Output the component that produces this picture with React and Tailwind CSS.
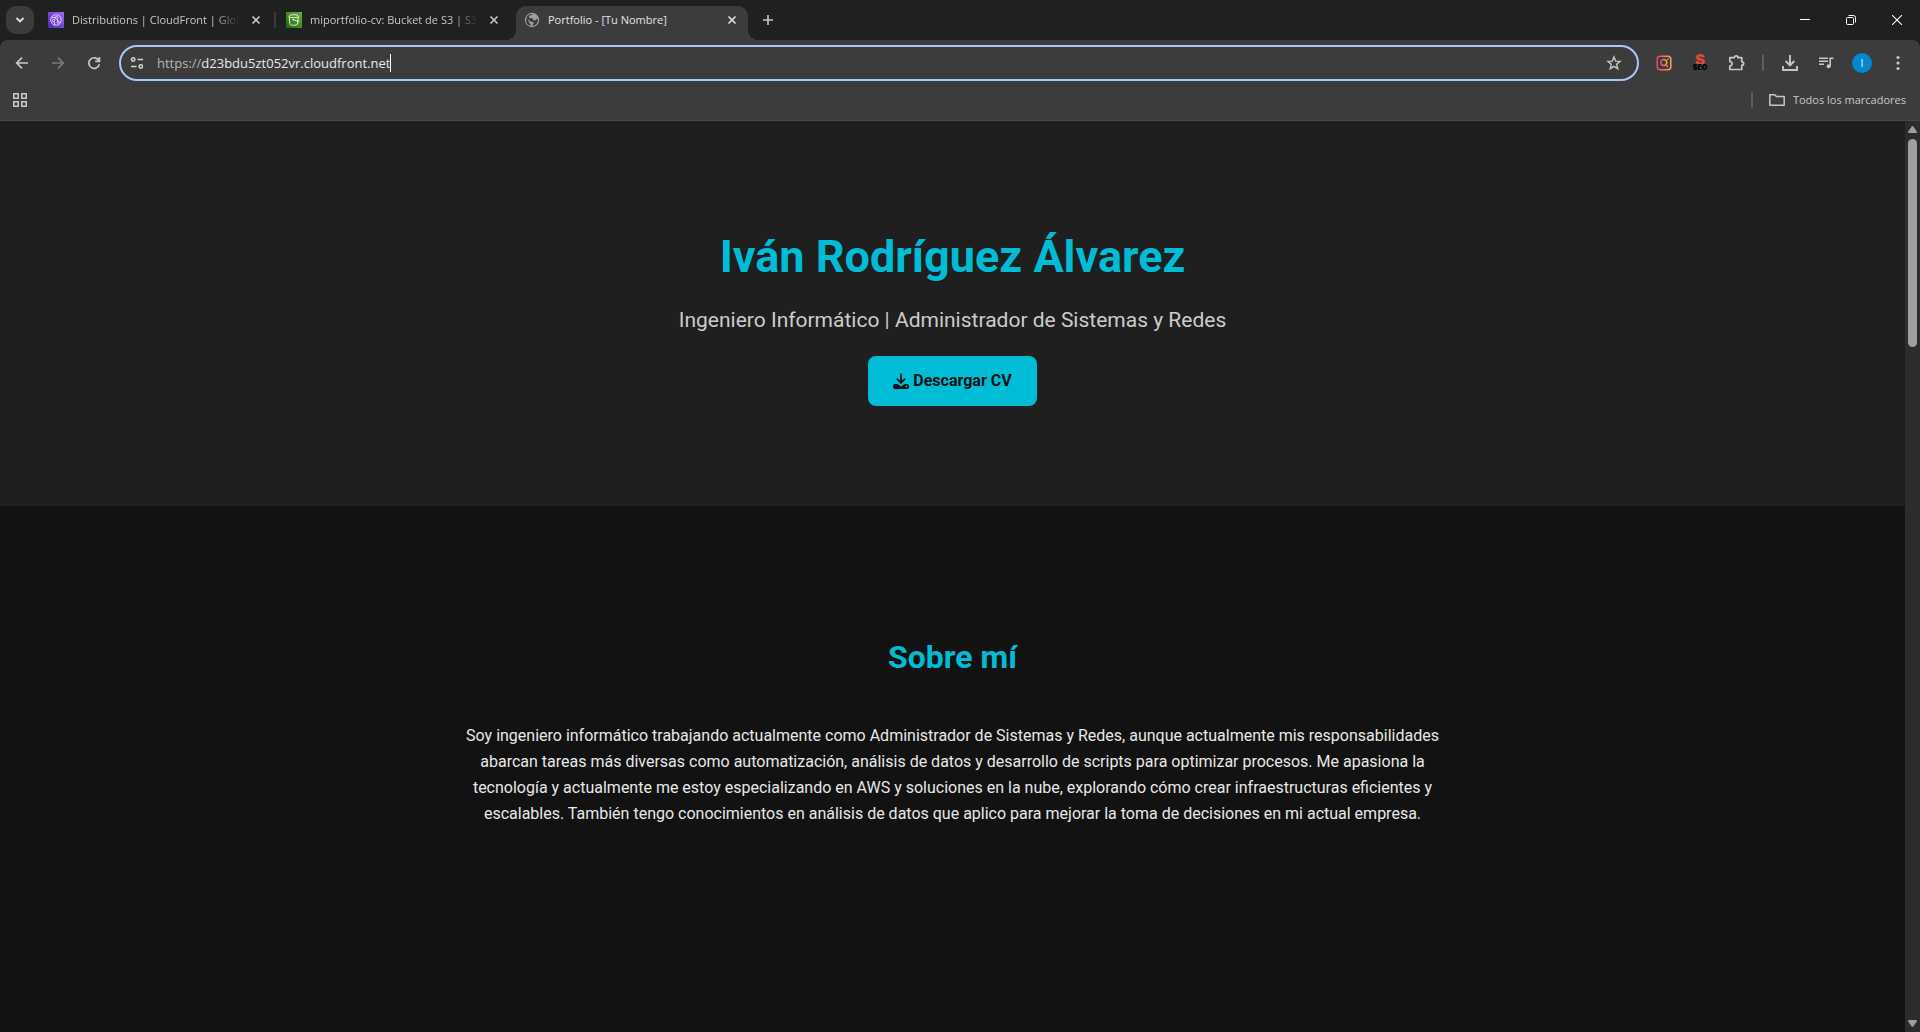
import React from "react";

const uiFont = "font-['Open_Sans','Noto_Sans',sans-serif]";

function Stroke({ size = 16, width = 1.8, children, className = "" }) {
  return (
    <svg width={size} height={size} viewBox={`0 0 ${size} ${size}`} fill="none" stroke="currentColor" strokeWidth={width} className={className} aria-hidden="true">
      {children}
    </svg>
  );
}

function CloudFrontIcon() {
  return (
    <svg width="16" height="16" viewBox="0 0 16 16" className="shrink-0" aria-hidden="true">
      <defs>
        <linearGradient id="cf" x1="0" y1="1" x2="1" y2="0">
          <stop offset="0" stopColor="#4d27aa" />
          <stop offset="1" stopColor="#a166ff" />
        </linearGradient>
      </defs>
      <rect width="16" height="16" fill="url(#cf)" />
      <g fill="none" stroke="#e8defc" strokeWidth="0.9">
        <circle cx="8" cy="8" r="5.3" />
        <circle cx="8.6" cy="5.6" r="1.2" />
        <circle cx="5.6" cy="8.6" r="1.1" />
        <circle cx="10.2" cy="10.2" r="1.1" />
        <path d="M7.6 6.4 6.3 7.7M9 6.8l.9 2.3M3.5 5.6 7.4 5.4M6 9.7l1 3.3" />
      </g>
    </svg>
  );
}

function BucketIcon() {
  return (
    <svg width="16" height="16" viewBox="0 0 16 16" className="shrink-0" aria-hidden="true">
      <defs>
        <linearGradient id="s3" x1="0" y1="1" x2="1" y2="0">
          <stop offset="0" stopColor="#1b660f" />
          <stop offset="1" stopColor="#6cae3e" />
        </linearGradient>
      </defs>
      <rect width="16" height="16" fill="url(#s3)" />
      <g fill="none" stroke="#e3f3dc" strokeWidth="1">
        <path d="M3 4.4 4 12.2c.3 1.4 7 1.4 7.4 0L12.4 4.4" />
        <ellipse cx="7.7" cy="4.2" rx="4.7" ry="1.5" />
        <path d="M7.2 7.4 12 9.6c1 .4 1.3-.5.3-1.1" />
      </g>
      <circle cx="7.2" cy="7.6" r="0.9" fill="#e3f3dc" />
    </svg>
  );
}

function GlobeIcon() {
  return (
    <svg width="16" height="16" viewBox="0 0 16 16" className="shrink-0" aria-hidden="true">
      <circle cx="8" cy="8" r="7.2" fill="#9aa0a6" />
      <path d="M9 2.100 7.200 3.200 5.300 3.600 5 5.600 6.600 6.300 8.600 6.200 9.300 8.200 11.600 8.300 12.200 7.100 14 7.400A6.100 6.100 0 0 1 8.600 14L8.700 12.200 9.800 11.200 8.900 9.900 6.200 9.400 5.200 8 2.100 7.300A6.100 6.100 0 0 0 6.400 13.900L6.700 12 5 10.700 4.800 9.300 2.300 6.200A6.100 6.100 0 0 1 9 2.100Z" fill="#3c3c3c" />
    </svg>
  );
}

function CloseX() {
  return (
    <Stroke size={10} width={1.6}>
      <path d="m1.500 1.500 7 7m0-7-7 7" />
    </Stroke>
  );
}

const tabs = [
  { title: "Distributions | CloudFront | Global", Icon: CloudFrontIcon, divider: true },
  { title: "miportfolio-cv: Bucket de S3 | S3", Icon: BucketIcon, divider: false },
];

function Tab({ title, Icon, divider, active }) {
  return (
    <div
      className={
        active
          ? "relative flex h-[34px] w-[232px] items-center rounded-t-[10px] bg-[#3c3c3c] pb-[6px] pl-2 text-[#e3e3e3]"
          : "relative flex h-[34px] w-[238px] items-center pb-[6px] pl-2 text-[#c7c7c7]"
      }
    >
      {active && (
        <>
          <span className="absolute bottom-0 -left-[10px] size-[10px] bg-[radial-gradient(circle_at_0_0,#1f2020_10px,#3c3c3c_10px)]" />
          <span className="absolute -right-[10px] bottom-0 size-[10px] bg-[radial-gradient(circle_at_100%_0,#1f2020_10px,#3c3c3c_10px)]" />
        </>
      )}
      <Icon />
      <span
        className={
          active
            ? "ml-2 w-[168px] overflow-hidden text-[11px] whitespace-nowrap"
            : "ml-2 w-[168px] overflow-hidden [mask-image:linear-gradient(to_right,#000_85%,transparent_100%)] text-[11px] whitespace-nowrap"
        }
      >
        {title}
      </span>
      <button aria-label="Cerrar pestaña" className="ml-2 flex size-4 items-center justify-center">
        <CloseX />
      </button>
      {divider && <span className="ml-auto mr-[2px] h-4 w-[2px] rounded bg-[#3c3c3c]" />}
    </div>
  );
}

function TabStrip() {
  return (
    <div className="flex h-10 items-end bg-[#1f2020]">
      <button aria-label="Buscar pestañas" className="mx-[6px] mb-[6px] flex size-7 items-center justify-center rounded-[10px] bg-[#3c3c3c] text-[#e3e3e3]">
        <Stroke size={10} width={1.8}>
          <path d="m1.500 3 3.500 3.500L8.500 3" />
        </Stroke>
      </button>
      {tabs.map((t) => (
        <Tab key={t.title} {...t} />
      ))}
      <Tab title="Portfolio - [Tu Nombre]" Icon={GlobeIcon} active />
      <button aria-label="Nueva pestaña" className="mb-[6px] ml-[6px] flex size-7 items-center justify-center text-[#c7c7c7]">
        <Stroke size={12} width={1.6}>
          <path d="M6 1v10M1 6h10" />
        </Stroke>
      </button>
      <div className="ml-auto flex self-stretch text-white">
        <button aria-label="Minimizar" className="flex w-[46px] items-center justify-center">
          <Stroke size={10} width={1}>
            <path d="M0 4.500h10" />
          </Stroke>
        </button>
        <button aria-label="Restaurar" className="flex w-[46px] items-center justify-center">
          <Stroke size={10} width={1}>
            <rect x="0.500" y="2.500" width="7" height="7" rx="1" />
            <path d="M2.500.5H7.500a2 2 0 0 1 2 2V7.500" />
          </Stroke>
        </button>
        <button aria-label="Cerrar" className="flex w-[46px] items-center justify-center">
          <Stroke size={10} width={1.1}>
            <path d="m0 0 10 10M10 0 0 10" />
          </Stroke>
        </button>
      </div>
    </div>
  );
}

function ToolButton({ label, children, className = "text-[#c7c7c7]" }) {
  return (
    <button aria-label={label} className={`flex h-9 w-9 shrink-0 items-center justify-center ${className}`}>
      {children}
    </button>
  );
}

function InstaSearchIcon() {
  return (
    <svg width="16" height="16" viewBox="0 0 16 16" fill="none" aria-hidden="true">
      <defs>
        <linearGradient id="ig" x1="0" y1="0" x2="1" y2="0">
          <stop offset="0" stopColor="#ee3f78" />
          <stop offset="1" stopColor="#fba744" />
        </linearGradient>
      </defs>
      <g stroke="url(#ig)" strokeWidth="1.500">
        <rect x="1.200" y="1.200" width="13.600" height="13.600" rx="3" />
        <circle cx="7.700" cy="7.500" r="3" />
        <path d="m9.800 9.800 2 2.200" />
      </g>
      <circle cx="12" cy="4" r="0.800" fill="#fba744" />
    </svg>
  );
}

function SeoIcon() {
  return (
    <span className="flex w-4 flex-col items-center font-['Inter','Liberation_Sans',sans-serif] font-black" aria-hidden="true">
      <span className="h-[9px] text-[15px] leading-[9px] text-[#dd4a30]">S</span>
      <span className="h-[7px] text-[7px] leading-[7px] text-black">SEO</span>
    </span>
  );
}

function Toolbar() {
  return (
    <div className="flex h-[46px] items-center bg-[#3c3c3c] px-1">
      <ToolButton label="Atrás">
        <Stroke size={14} width={1.700}>
          <path d="M13 7H2M7 1.700 1.700 7 7 12.300" />
        </Stroke>
      </ToolButton>
      <ToolButton label="Adelante" className="text-[#7b7b7b]">
        <Stroke size={14} width={1.700}>
          <path d="M1 7h11M7 1.700 12.300 7 7 12.300" />
        </Stroke>
      </ToolButton>
      <ToolButton label="Volver a cargar">
        <Stroke size={14} width={1.700}>
          <path d="M12 5A5.300 5.300 0 1 0 12.300 8.200M12.400 1v4.300H8.200" />
        </Stroke>
      </ToolButton>
      <form className="mx-[7px] flex h-9 grow items-center rounded-full border-2 border-[#a8c7fa] pl-[9px] text-[13px]" onSubmit={(e) => e.preventDefault()}>
        <Stroke size={14} width={1.500} className="mr-[13px] text-[#d6d6d6]">
          <circle cx="3.200" cy="3.500" r="1.700" />
          <path d="M7.500 3.500H13M1 10.500H6.500" />
          <circle cx="10.800" cy="10.500" r="1.700" />
        </Stroke>
        <label htmlFor="url" className="pt-px text-[#b4b4b4]">https://</label>
        <input id="url" aria-label="Dirección" defaultValue="d23bdu5zt052vr.cloudfront.net" className="field-sizing-content bg-transparent pt-px text-[#e9e9e9] outline-none" />
        <span className="h-[18px] w-px bg-white" />
        <button type="button" aria-label="Añadir a marcadores" className="mr-[15px] ml-auto text-[#c7c7c7]">
          <Stroke size={16} width={1.400}>
            <path d="m8 1.900 1.700 4.200 4.400.3-3.400 2.900 1.100 4.400L8 11.300l-3.800 2.400 1.100-4.400L1.900 6.400l4.400-.3Z" />
          </Stroke>
        </button>
      </form>
      <ToolButton label="Búsqueda"><InstaSearchIcon /></ToolButton>
      <ToolButton label="SEO"><SeoIcon /></ToolButton>
      <ToolButton label="Extensiones">
        <Stroke size={18} width={1.700}>
          <path d="M2.800 3.700H7.300C7.300 1.200 10.900 1.200 10.900 3.700H14.800V7.800C17.300 7.800 17.300 11.200 14.800 11.200V15.500H2.800V12C5.900 11.600 5.900 7.900 2.800 7.500Z" strokeLinejoin="round" />
        </Stroke>
      </ToolButton>
      <span className="mx-2 h-4 w-[2px] bg-[#5e5e5e]" />
      <ToolButton label="Descargas">
        <Stroke size={16} width={1.900}>
          <path d="M8 0v10M3.700 6 8 10.300 12.300 6M1 11v4h14v-4" />
        </Stroke>
      </ToolButton>
      <ToolButton label="Control multimedia">
        <Stroke size={16} width={1.600}>
          <path d="M1 3.200h9M1 6.200h9M1 9.200h5M12.200 11V3.200h3.300" />
          <circle cx="10.600" cy="11.200" r="2" fill="currentColor" stroke="none" />
        </Stroke>
      </ToolButton>
      <ToolButton label="Perfil">
        <span className="flex size-5 items-center justify-center rounded-full bg-[#0288d1] text-[10px] text-white">I</span>
      </ToolButton>
      <ToolButton label="Menú">
        <svg width="4" height="16" viewBox="0 0 4 16" fill="currentColor" aria-hidden="true">
          <circle cx="2" cy="2.500" r="1.600" />
          <circle cx="2" cy="8" r="1.600" />
          <circle cx="2" cy="13.500" r="1.600" />
        </svg>
      </ToolButton>
    </div>
  );
}

function BookmarksBar() {
  return (
    <div className="flex h-[35px] items-center border-b border-[#4a4a4a] bg-[#3c3c3c] pr-[14px] pb-[6px] pl-[13px] text-[#c7c7c7]">
      <button aria-label="Aplicaciones">
        <Stroke size={14} width={1.600}>
          <path d="M.8.8h4.400v4.400H.8zM8.800.8h4.400v4.400H8.800zM.8 8.800h4.400v4.400H.8zM8.800 8.800h4.400v4.400H8.800z" />
        </Stroke>
      </button>
      <span className="ml-auto h-4 w-[2px] bg-[#5e5e5e]" />
      <button className="ml-4 flex items-center gap-2 text-[11px]">
        <Stroke size={16} width={1.500}>
          <path d="M.8 2.800h5l1.600 1.700h7.800v8.700H.8Z" strokeLinejoin="round" />
        </Stroke>
        Todos los marcadores
      </button>
    </div>
  );
}

function Scrollbar() {
  return (
    <div className="flex w-[15px] shrink-0 flex-col items-center bg-[#2c2c2c] py-[5px] text-[#9f9f9f]" aria-hidden="true">
      <svg width="9" height="7" viewBox="0 0 9 7" fill="currentColor">
        <path d="M3.700.5Q4.500-.4 5.300.5L8.800 5.500Q9.200 7 8 7H1Q-.2 7 .2 5.500Z" />
      </svg>
      <div className="mt-[6px] h-[208px] w-[9px] rounded-full bg-[#9f9f9f]" />
      <svg width="9" height="7" viewBox="0 0 9 7" fill="currentColor" className="mt-auto">
        <path d="M3.700 6.500Q4.500 7.400 5.300 6.500L8.800 1.500Q9.200 0 8 0H1Q-.2 0 .2 1.500Z" />
      </svg>
    </div>
  );
}

function DownloadIcon() {
  return (
    <svg width="16" height="16" viewBox="0 0 16 16" aria-hidden="true">
      <path d="M8 1v8.500M4.300 6.200 8 9.900l3.700-3.700" fill="none" stroke="currentColor" strokeWidth="1.700" strokeLinecap="round" strokeLinejoin="round" />
      <path fillRule="evenodd" fill="currentColor" d="M2 11h2.600L7 13q1 .7 2 0L11.400 11H14q2 0 2 2v1q0 2-2 2H2q-2 0-2-2v-1q0-2 2-2ZM13.500 12.700a.8.8 0 1 0 .01 0Z" />
    </svg>
  );
}

function Page() {
  return (
    <main className="grow overflow-hidden bg-[#121212] text-center font-['Roboto',sans-serif] text-base leading-[26px] text-[#e8e8e8]">
      <header className="bg-[#1f1f1f] px-8 py-[100px]">
        <h1 className="text-[45px] leading-[72px] font-bold text-[#00bcd4]">Iván Rodríguez Álvarez</h1>
        <p className="mt-[11px] text-[21px] leading-8 text-[#cccccc]">Ingeniero Informático | Administrador de Sistemas y Redes</p>
        <a href="#cv" className="mt-5 inline-flex h-[50px] items-center gap-1 rounded-lg bg-[#00bcd4] px-[25px] font-bold text-[#121212]">
          <DownloadIcon />
          Descargar CV
        </a>
      </header>
      <section className="mx-auto max-w-[1000px] px-3 pt-[125px]">
        <h2 className="text-[32px] leading-[52px] font-bold text-[#00bcd4]">Sobre mí</h2>
        <p className="mt-10">
          Soy ingeniero informático trabajando actualmente como Administrador de Sistemas y Redes, aunque actualmente mis responsabilidades abarcan tareas más diversas como automatización, análisis de datos y desarrollo de scripts para optimizar procesos. Me apasiona la tecnología y actualmente me estoy especializando en AWS y soluciones en la nube, explorando cómo crear infraestructuras eficientes y escalables. También tengo conocimientos en análisis de datos que aplico para mejorar la toma de decisiones en mi actual empresa.
        </p>
      </section>
    </main>
  );
}

export default function App() {
  return (
    <div className="flex h-screen flex-col bg-[#121212]">
      <div className={`shrink-0 bg-[#1f2020] ${uiFont}`}>
        <TabStrip />
        <div className="overflow-hidden rounded-t-lg">
          <Toolbar />
          <BookmarksBar />
        </div>
      </div>
      <div className="flex min-h-0 grow">
        <Page />
        <Scrollbar />
      </div>
    </div>
  );
}
